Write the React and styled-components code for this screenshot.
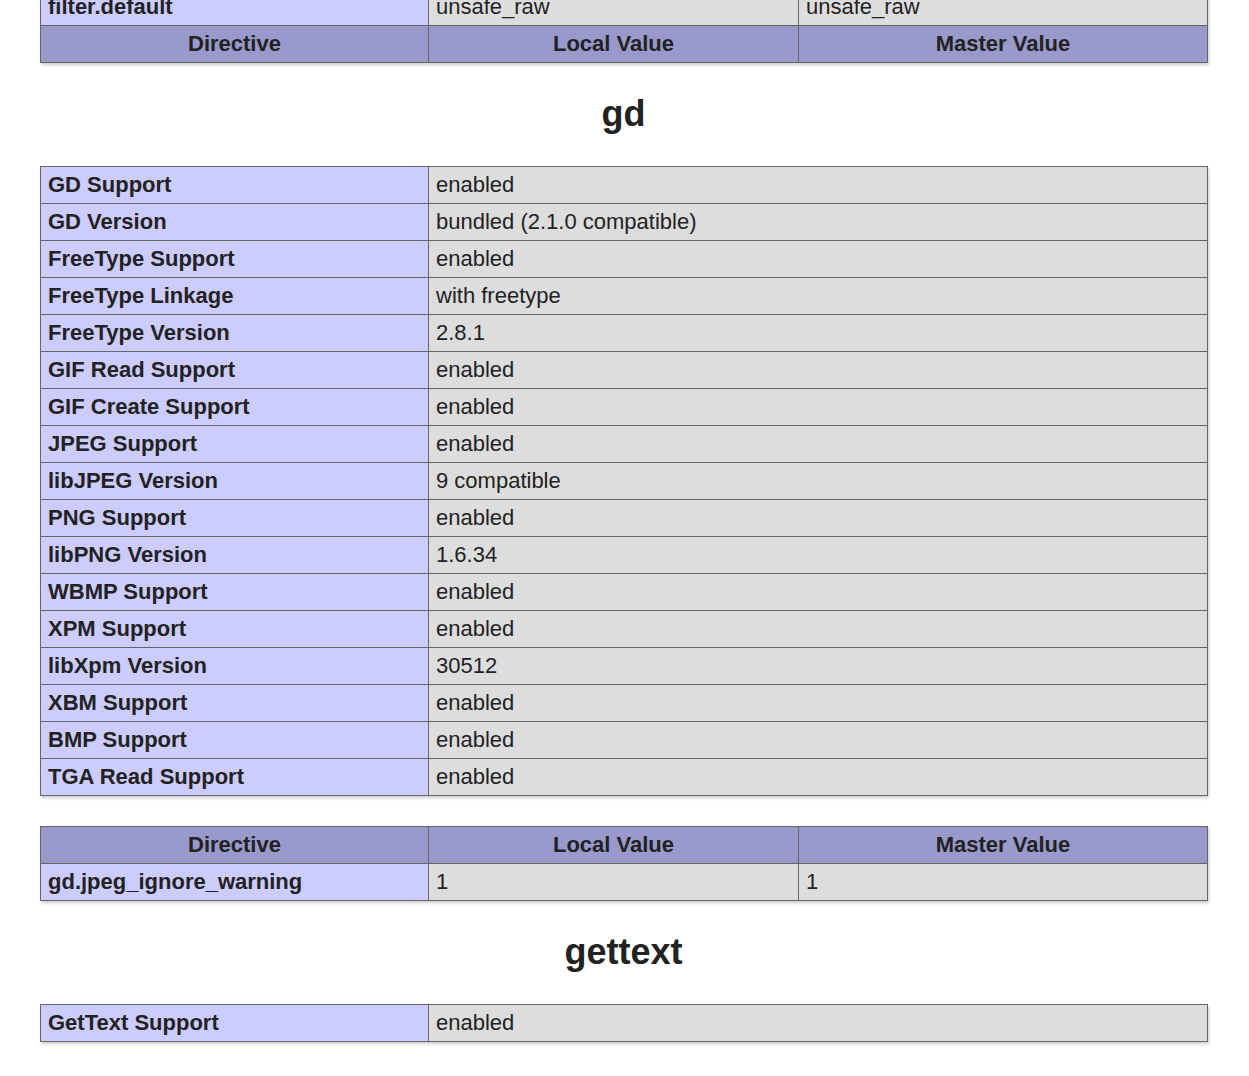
import React from 'react';
import styled, { createGlobalStyle } from 'styled-components';

const Global = createGlobalStyle`
  body {
    margin: 0;
    background: #fff;
    color: #222;
    font-family: "Liberation Sans", Arial, sans-serif;
  }
`;

const Page = styled.div`
  width: 1167px;
  margin: -12px 0 0 40px;
`;

const Table = styled.table`
  width: 1167px;
  border-collapse: collapse;
  table-layout: fixed;
  box-shadow: 1px 2px 3px #ccc;
  margin-bottom: 30px;
`;

const Cell = styled.td`
  border: 1px solid #666;
  font-size: 22px;
  line-height: 28px;
  padding: 4px 7px 4px 7px;
  vertical-align: baseline;
  white-space: nowrap;
  overflow: hidden;
  background: ${p => (p.$kind === 'e' ? '#ccf' : p.$kind === 'h' ? '#99c' : '#ddd')};
  font-weight: ${p => (p.$kind === 'v' ? 'normal' : 'bold')};
  text-align: ${p => (p.$kind === 'h' ? 'center' : 'left')};
`;

const Title = styled.h2`
  margin: 0 0 31px;
  text-align: center;
  font-size: 36px;
  line-height: 42px;
  font-weight: bold;
`;

const Cols3 = () => (
  <colgroup>
    <col style={{ width: 388 }} />
    <col style={{ width: 370 }} />
    <col style={{ width: 409 }} />
  </colgroup>
);
const Cols2 = () => (
  <colgroup>
    <col style={{ width: 388 }} />
    <col style={{ width: 779 }} />
  </colgroup>
);

const Header = () => (
  <tr>
    <Cell $kind="h">Directive</Cell>
    <Cell $kind="h">Local Value</Cell>
    <Cell $kind="h">Master Value</Cell>
  </tr>
);

const gd = [
  ['GD Support', 'enabled'],
  ['GD Version', 'bundled (2.1.0 compatible)'],
  ['FreeType Support', 'enabled'],
  ['FreeType Linkage', 'with freetype'],
  ['FreeType Version', '2.8.1'],
  ['GIF Read Support', 'enabled'],
  ['GIF Create Support', 'enabled'],
  ['JPEG Support', 'enabled'],
  ['libJPEG Version', '9 compatible'],
  ['PNG Support', 'enabled'],
  ['libPNG Version', '1.6.34'],
  ['WBMP Support', 'enabled'],
  ['XPM Support', 'enabled'],
  ['libXpm Version', '30512'],
  ['XBM Support', 'enabled'],
  ['BMP Support', 'enabled'],
  ['TGA Read Support', 'enabled'],
];

export default function App() {
  return (
    <Page>
      <Global />
      <Table>
        <Cols3 />
        <tbody>
          <tr>
            <Cell $kind="e">filter.default</Cell>
            <Cell $kind="v">unsafe_raw</Cell>
            <Cell $kind="v">unsafe_raw</Cell>
          </tr>
          <Header />
        </tbody>
      </Table>
      <Title>gd</Title>
      <Table>
        <Cols2 />
        <tbody>
          {gd.map(([k, v]) => (
            <tr key={k}>
              <Cell $kind="e">{k}</Cell>
              <Cell $kind="v">{v}</Cell>
            </tr>
          ))}
        </tbody>
      </Table>
      <Table>
        <Cols3 />
        <tbody>
          <Header />
          <tr>
            <Cell $kind="e">gd.jpeg_ignore_warning</Cell>
            <Cell $kind="v">1</Cell>
            <Cell $kind="v">1</Cell>
          </tr>
        </tbody>
      </Table>
      <Title>gettext</Title>
      <Table>
        <Cols2 />
        <tbody>
          <tr>
            <Cell $kind="e">GetText Support</Cell>
            <Cell $kind="v">enabled</Cell>
          </tr>
        </tbody>
      </Table>
    </Page>
  );
}
